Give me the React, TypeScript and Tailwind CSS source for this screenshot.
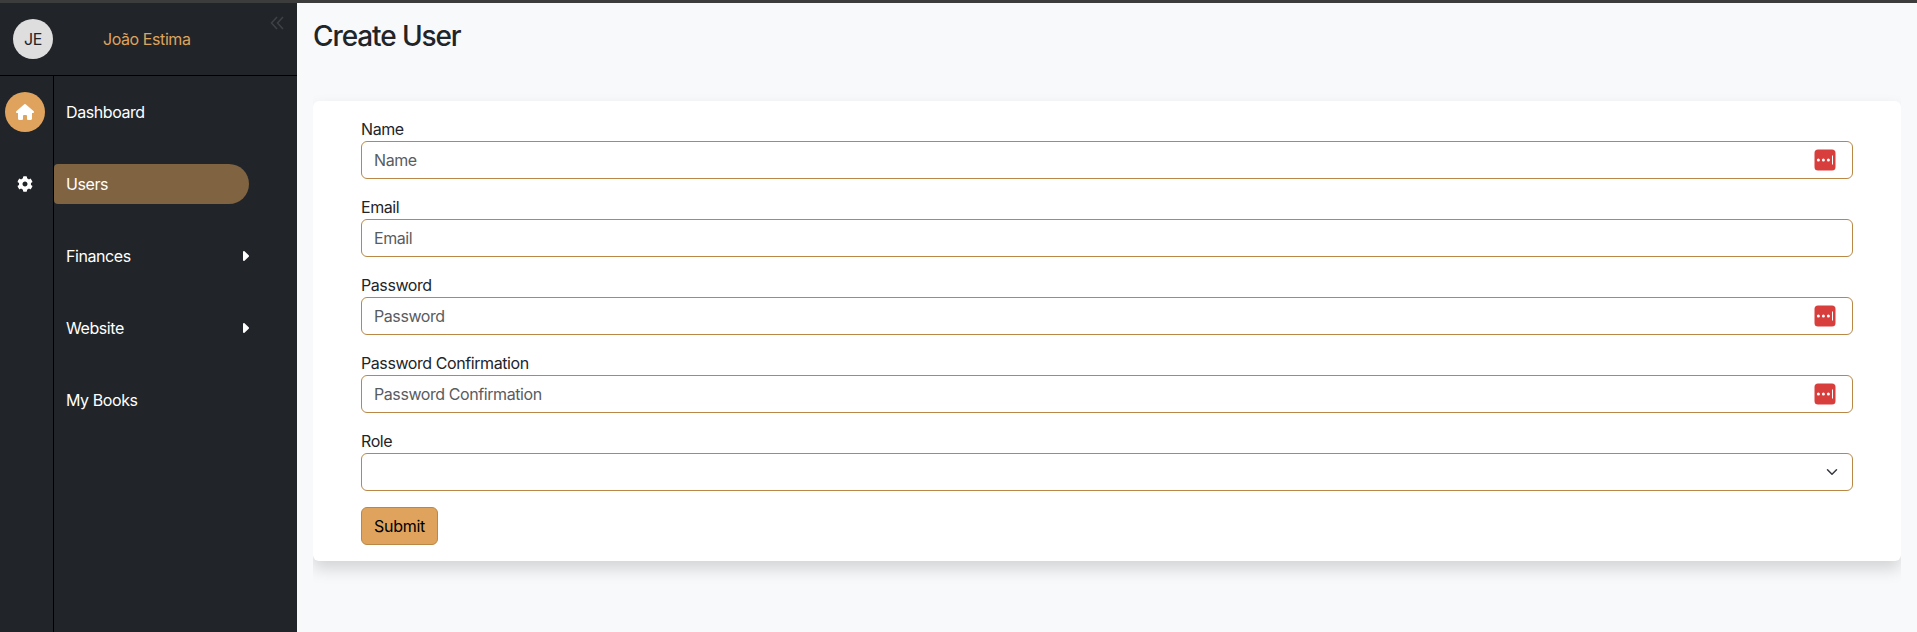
import React from 'react';
import { FaCog } from 'react-icons/fa';

function PasswordManagerIcon() {
  return (
    <svg width="22" height="22" viewBox="0 0 22 22" className="shrink-0">
      <rect x="0.5" y="0.5" width="21" height="21" rx="3.5" fill="#d73e3c" />
      <circle cx="4.4" cy="11" r="1.5" fill="#fff" />
      <circle cx="9.4" cy="11" r="1.5" fill="#fff" />
      <circle cx="14.4" cy="11" r="1.5" fill="#fff" />
      <rect x="18" y="6.5" width="1" height="9" fill="#fff" />
    </svg>
  );
}

function HouseIcon() {
  return (
    <svg width="18" height="16" viewBox="0 0 18 16" fill="currentColor">
      <path d="M8.3.3a1.1 1.1 0 0 1 1.4 0l8 7c.6.6.3 1.7-.6 1.7h-1.1v5.5c0 .9-.6 1.5-1.5 1.5H12a1 1 0 0 1-1-1v-3a1 1 0 0 0-1-1H8a1 1 0 0 0-1 1v3a1 1 0 0 1-1 1H3.5C2.6 16 2 15.400 2 14.500V9H.9C0 9-.300 7.900.3 7.300z" />
    </svg>
  );
}

function CaretIcon() {
  return (
    <svg width="6" height="10" viewBox="0 0 6 10" fill="currentColor">
      <path d="M0 .9C0 .1.900-.3 1.500.3L5.700 4.300a1 1 0 0 1 0 1.400L1.500 9.700C.9 10.300 0 9.900 0 9.100z" />
    </svg>
  );
}

const menu = [
  { label: 'Dashboard' },
  { label: 'Users', active: true },
  { label: 'Finances', nested: true },
  { label: 'Website', nested: true },
  { label: 'My Books' },
];

const fields = [
  { label: 'Name', icon: true },
  { label: 'Email', icon: false },
  { label: 'Password', icon: true },
  { label: 'Password Confirmation', icon: true },
];

function Sidebar() {
  return (
    <aside className="flex w-[297px] shrink-0 flex-col bg-[#212529]">
      <header className="flex h-[73px] border-b border-black pl-[13px] pt-4">
        <div className="flex size-10 items-center justify-center rounded-full bg-[#dedede] text-[#212529]">JE</div>
        <div className="ml-[50px] flex h-10 w-[150px] items-center text-[#dfa35d]">João Estima</div>
        <svg width="14" height="14" viewBox="0 0 14 14" className="ml-[17px] -mt-[3px]" fill="none" stroke="#3e4246" strokeWidth="1.5">
          <path d="M7 1 1.500 7 7 13M13 1 7.500 7l5.500 6" />
        </svg>
      </header>
      <div className="flex flex-1">
        <nav className="flex w-[54px] flex-col gap-8 border-r border-black pl-[5px] pt-4 text-white">
          <a className="flex size-10 items-center justify-center rounded-full bg-[#dfa35d]">
            <HouseIcon />
          </a>
          <a className="flex size-10 items-center justify-center">
            <FaCog size={16} />
          </a>
        </nav>
        <nav className="flex w-[195px] flex-col gap-8 pt-4 text-white">
          {menu.map((m) => (
            <a
              key={m.label}
              className={`flex h-10 items-center justify-between rounded-l-[4px] rounded-r-[20px] pl-3 ${m.active ? 'bg-[#806341]' : ''}`}
            >
              {m.label}
              {m.nested && <CaretIcon />}
            </a>
          ))}
        </nav>
      </div>
    </aside>
  );
}

export default function App() {
  return (
    <div className="flex h-[632px] flex-col overflow-hidden border-t-[3px] border-[#3c3c3c] font-['Inter',sans-serif] text-[16px] leading-6 tracking-[-0.42px] text-[#212529]">
      <div className="flex flex-1">
        <Sidebar />
        <main className="flex-1 bg-[#f8f9fb] px-4 pt-4">
          <h1 className="text-[28px] font-medium leading-[34px] tracking-[-1.1px]">Create User</h1>
          <div className="overflow-hidden pb-10 pt-12">
            <form className="flex flex-col gap-4 rounded-[6px] bg-white px-12 py-4 shadow-[0_8px_16px_rgba(0,0,0,0.15)]">
              {fields.map((f) => (
                <div key={f.label}>
                  <div className="h-6">{f.label}</div>
                  <div className="flex h-[38px] items-center justify-between rounded-[6px] border border-[#b98746] pl-3 pr-4 text-[#595c5f]">
                    <span>{f.label}</span>
                    {f.icon && <PasswordManagerIcon />}
                  </div>
                </div>
              ))}
              <div>
                <div className="h-6">Role</div>
                <div className="flex h-[38px] items-center justify-end rounded-[6px] border border-[#b98746] pr-[14px]">
                  <svg width="12" height="12" viewBox="0 0 16 16" fill="none" stroke="#343a40" strokeWidth="2" strokeLinecap="round" strokeLinejoin="round">
                    <path d="m2 5 6 6 6-6" />
                  </svg>
                </div>
              </div>
              <button type="button" className="h-[38px] w-[77px] rounded-[6px] border border-[#b98746] bg-[#dfa35d] tracking-[-0.3px] text-black">
                Submit
              </button>
            </form>
          </div>
        </main>
      </div>
    </div>
  );
}
